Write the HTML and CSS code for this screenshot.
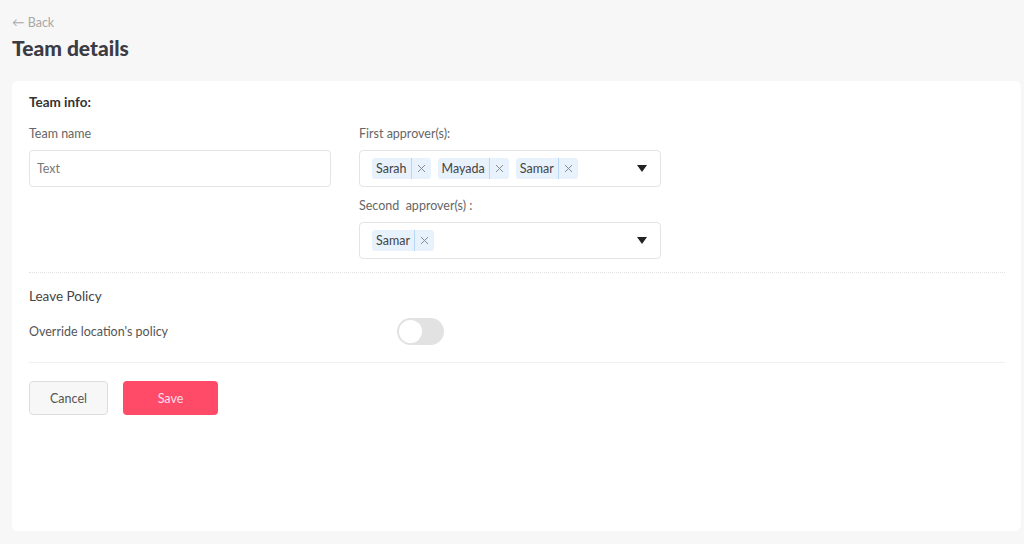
FILE: index.html
```html
<!DOCTYPE html>
<html lang="en">
<head>
    <meta charset="UTF-8">
    <meta name="viewport" content="width=device-width, initial-scale=1.0">
    <title>Team details</title>
    <link rel="stylesheet" href="styles.css">
</head>
<body>
    <a class="back" href="#">&#8592; Back</a>
    <h1>Team details</h1>

    <div class="card">
        <h2>Team info:</h2>
        <div class="columns">
            <div class="col">
                <div class="form-group">
                    <label for="teamName">Team name</label>
                    <input type="text" id="teamName" placeholder="Text">
                </div>
            </div>
            <div class="col">
                <div class="form-group">
                    <label>First approver(s):</label>
                    <div class="select">
                        <span class="chip">Sarah<span class="chip-x"><svg width="9" height="9" viewBox="0 0 9 9"><path d="M1 1L8 8M8 1L1 8"/></svg></span></span>
                        <span class="chip">Mayada<span class="chip-x"><svg width="9" height="9" viewBox="0 0 9 9"><path d="M1 1L8 8M8 1L1 8"/></svg></span></span>
                        <span class="chip">Samar<span class="chip-x"><svg width="9" height="9" viewBox="0 0 9 9"><path d="M1 1L8 8M8 1L1 8"/></svg></span></span>
                        <span class="caret"></span>
                    </div>
                </div>
                <div class="form-group">
                    <label>Second &nbsp;approver(s) :</label>
                    <div class="select">
                        <span class="chip">Samar<span class="chip-x"><svg width="9" height="9" viewBox="0 0 9 9"><path d="M1 1L8 8M8 1L1 8"/></svg></span></span>
                        <span class="caret"></span>
                    </div>
                </div>
            </div>
        </div>

        <div class="section">
            <h3>Leave Policy</h3>
            <div class="row">
                <span class="row-label">Override location's policy</span>
                <span class="toggle"><span class="knob"></span></span>
            </div>
        </div>

        <div class="actions">
            <button class="btn-cancel">Cancel</button>
            <button class="btn-save">Save</button>
        </div>
    </div>
</body>
</html>
```

FILE: styles.css
```css
body {
    font-family: Lato, "Open Sans", Arial, sans-serif;
    margin: 0;
    padding: 15px 3px 13px 12px;
    background-color: #f7f7f7;
    color: #444;
    height: 544px;
    box-sizing: border-box;
    display: flex;
    flex-direction: column;
}
.back {
    color: #a8a8a8;
    font-size: 12.5px;
    text-decoration: none;
    line-height: 16px;
}
h1 {
    margin: 4px 0 20px;
    font-size: 21px;
    line-height: 26px;
    color: #3c3c44;
    font-weight: 900;
}
.card {
    flex: 1;
    background-color: #fff;
    border-radius: 6px;
    padding: 13px 16px 0 17px;
}
h2 {
    margin: 0 0 16px;
    font-size: 13.5px;
    line-height: 16px;
    font-weight: 700;
    color: #333;
}
.columns {
    display: flex;
    gap: 28px;
}
.col {
    width: 302px;
}
.form-group {
    margin-bottom: 11px;
}
label {
    display: block;
    font-size: 12.5px;
    line-height: 15px;
    color: #666;
    margin-bottom: 9px;
}
input[type="text"] {
    width: 100%;
    height: 37px;
    padding: 0 7px;
    border: 1px solid #e4e4e4;
    border-radius: 4px;
    box-sizing: border-box;
    font-family: inherit;
    font-size: 12.5px;
    color: #444;
}
input::placeholder {
    color: #777;
}
.select {
    height: 37px;
    border: 1px solid #e4e4e4;
    border-radius: 4px;
    box-sizing: border-box;
    display: flex;
    align-items: center;
    gap: 7px;
    padding: 0 12px;
}
.chip {
    display: flex;
    align-items: center;
    height: 21px;
    background-color: #e8f2fd;
    border-radius: 3px;
    font-size: 12.5px;
    color: #444;
    padding-left: 4px;
}
.chip-x {
    display: flex;
    align-items: center;
    height: 100%;
    border-left: 1px solid #b9d7f5;
    margin-left: 4px;
    padding: 0 5px 0 5px;
}
.chip-x svg {
    stroke: #8a8a8a;
    stroke-width: 1;
    fill: none;
}
.caret {
    margin-left: auto;
    width: 0;
    height: 0;
    border-left: 5px solid transparent;
    border-right: 5px solid transparent;
    border-top: 7px solid #222;
    margin-right: 1px;
}
.section {
    margin-top: 2px;
    border-top: 1px dotted #e2e2e2;
    border-bottom: 1px solid #f0f0f0;
    padding: 15px 0 17px;
}
h3 {
    margin: 0 0 14px;
    font-size: 13.5px;
    line-height: 16px;
    font-weight: 400;
    color: #444;
}
.row {
    display: flex;
    align-items: center;
}
.row-label {
    width: 368px;
    font-size: 12.5px;
    color: #555;
}
.toggle {
    width: 47px;
    height: 27px;
    border-radius: 14px;
    background-color: #e2e2e2;
    display: flex;
    align-items: center;
    padding-left: 2px;
    box-sizing: border-box;
}
.knob {
    width: 23px;
    height: 23px;
    border-radius: 50%;
    background-color: #fff;
}
.actions {
    display: flex;
    gap: 15px;
    padding-top: 18px;
}
button {
    height: 34px;
    border-radius: 4px;
    font-family: inherit;
    font-size: 12.5px;
    cursor: pointer;
}
.btn-cancel {
    width: 79px;
    background-color: #f7f7f7;
    border: 1px solid #dedede;
    color: #555;
}
.btn-save {
    width: 95px;
    background-color: #ff4b68;
    border: none;
    color: #fde;
}
```
